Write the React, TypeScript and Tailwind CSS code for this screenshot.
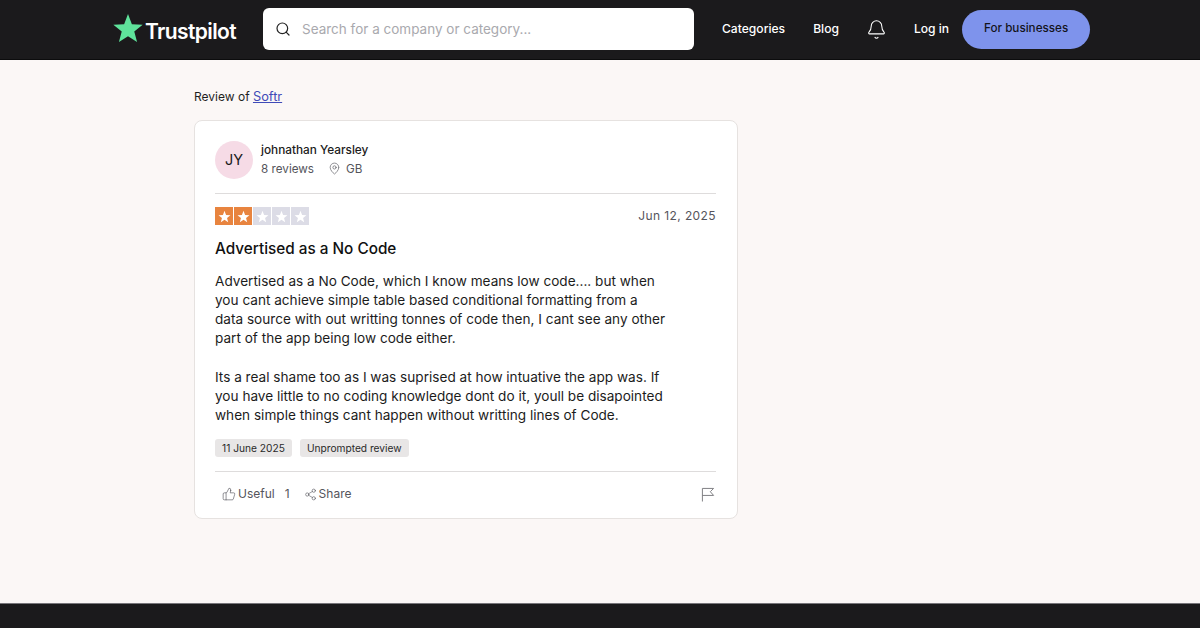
import { Search, MapPin, ThumbsUp, Share2, Bell } from "lucide-react";

const font = "font-['Inter','Noto_Sans',sans-serif]";

const Star = ({ className }: { className: string }) => (
  <svg viewBox="0 0 24 24" className={className} fill="currentColor">
    <path d="M12 1.5l2.9 7.6 8.1.4-6.3 5.1 2.1 7.9L12 18.1l-6.8 4.4 2.1-7.9L1 9.5l8.1-.4z" />
  </svg>
);

const Pennant = ({ className }: { className: string }) => (
  <svg viewBox="0 0 15 16" className={className} fill="none" stroke="currentColor" strokeWidth="1">
    <path d="M1.5 15.5V1.5H13.5L10 5l3.5 4H1.5" />
  </svg>
);

const Rating = ({ value }: { value: number }) => (
  <div className="flex gap-[1px]">
    {[1, 2, 3, 4, 5].map((n) => (
      <div key={n} className={`flex h-[18px] w-[18px] items-center justify-center text-white ${n <= value ? "bg-[#e8843f]" : "bg-[#dcdce6]"}`}>
        <Star className="h-[13px] w-[13px]" />
      </div>
    ))}
  </div>
);

const Chip = ({ children }: { children: React.ReactNode }) => (
  <span className="rounded-[3px] bg-[#e8e6e6] px-[7px] py-[2px] text-[10.2px] leading-[14px] text-[#2a2a2a]">{children}</span>
);

const App = () => {
  return (
    <div className={`flex h-[628px] w-[1200px] flex-col overflow-hidden bg-[#fbf7f6] ${font}`}>
      <header className="flex h-[60px] shrink-0 items-center border-b border-[#0c0c0d] bg-[#1b1a1c] pb-[1px] pl-[113px]">
        <div className="flex w-[150px] items-center">
          <Star className="mb-[3px] h-[32px] w-[32px] -translate-x-[1px] text-[#5fe39b]" />
          <span className="mt-[5px] text-[21px] font-semibold leading-none tracking-[-0.6px] text-white">Trustpilot</span>
        </div>
        <div className="flex h-[42px] w-[431px] items-center rounded-[6px] bg-white pl-[12px]">
          <Search className="h-[16px] w-[16px] text-[#222]" strokeWidth={1.8} />
          <span className="ml-[11px] text-[13.5px] text-[#a9a9ae]">Search for a company or category...</span>
        </div>
        <nav className="ml-[28px] flex items-center text-[12.1px] font-medium text-white">
          <span>Categories</span>
          <span className="ml-[28px]">Blog</span>
          <Bell className="ml-[27px] h-[21px] w-[21px]" strokeWidth={1.2} />
          <span className="ml-[27px]">Log in</span>
          <span className="ml-[13px] flex h-[39px] w-[128px] items-center justify-center rounded-full bg-[#7e93ec] text-[11.7px] font-medium text-[#14141c]">For businesses</span>
        </nav>
      </header>

      <main className="flex-1 pl-[194px] pt-[29px]">
        <p className="text-[12px] leading-[16px] text-[#1f1f1f]">
          Review of <span className="text-[12.8px] text-[#3f4bb8] underline">Softr</span>
        </p>
        <article className="mt-[15px] h-[399px] w-[544px] rounded-[8px] border border-[#e6e2e0] bg-white pl-[20px] pr-[21px] pt-[20px]">
          <div className="flex items-center border-b border-[#dedcdc] pb-[14px]">
            <div className="flex h-[38px] w-[38px] items-center justify-center rounded-full bg-[#f6dbe6] text-[14.5px] text-[#1c1c1c]">JY</div>
            <div className="ml-[8px] pb-[2px]">
              <div className="text-[11.8px] font-medium leading-[16px] text-[#1c1c1c]">johnathan Yearsley</div>
              <div className="mt-[3px] flex items-center text-[11.7px] leading-[16px] text-[#55555c]">
                <span>8 reviews</span>
                <MapPin className="ml-[14px] h-[13px] w-[13px]" strokeWidth={1.2} />
                <span className="ml-[5px]">GB</span>
              </div>
            </div>
          </div>
          <div className="mt-[13px] flex items-center justify-between">
            <Rating value={2} />
            <span className="text-[12px] tracking-[0.4px] text-[#55555c]">Jun 12, 2025</span>
          </div>
          <h2 className="mt-[13px] text-[15.3px] font-medium leading-[22px] text-[#111]">Advertised as a No Code</h2>
          <p className="mt-[12px] whitespace-nowrap text-[13.6px] leading-[19px] text-[#1c1c1c]">
            Advertised as a No Code, which I know means low code.... but when<br />
            you cant achieve simple table based conditional formatting from a<br />
            data source with out writting tonnes of code then, I cant see any other<br />
            part of the app being low code either.
          </p>
          <p className="mt-[20px] whitespace-nowrap text-[13.6px] leading-[19px] text-[#1c1c1c]">
            Its a real shame too as I was suprised at how intuative the app was. If<br />
            you have little to no coding knowledge dont do it, youll be disapointed<br />
            when simple things cant happen without writting lines of Code.
          </p>
          <div className="mt-[14px] flex gap-[8px]">
            <Chip>11 June 2025</Chip>
            <Chip>Unprompted review</Chip>
          </div>
          <div className="mt-[14px] flex items-center border-t border-[#dedcdc] pl-[7px] pr-[1px] pt-[14px] text-[12px] leading-[16px] text-[#55555c]">
            <ThumbsUp className="h-[14px] w-[14px]" strokeWidth={1.1} />
            <span className="ml-[2px]">Useful</span>
            <span className="ml-[10px]">1</span>
            <Share2 className="ml-[14px] h-[13px] w-[13px]" strokeWidth={1.1} />
            <span className="ml-[2px]">Share</span>
            <Pennant className="ml-auto h-[15px] w-[14px] text-[#77777c]" />
          </div>
        </article>
      </main>

      <footer className="h-[25px] shrink-0 border-t border-[#77757a] bg-[#1b1a1c]" />
    </div>
  );
};

export default App;
